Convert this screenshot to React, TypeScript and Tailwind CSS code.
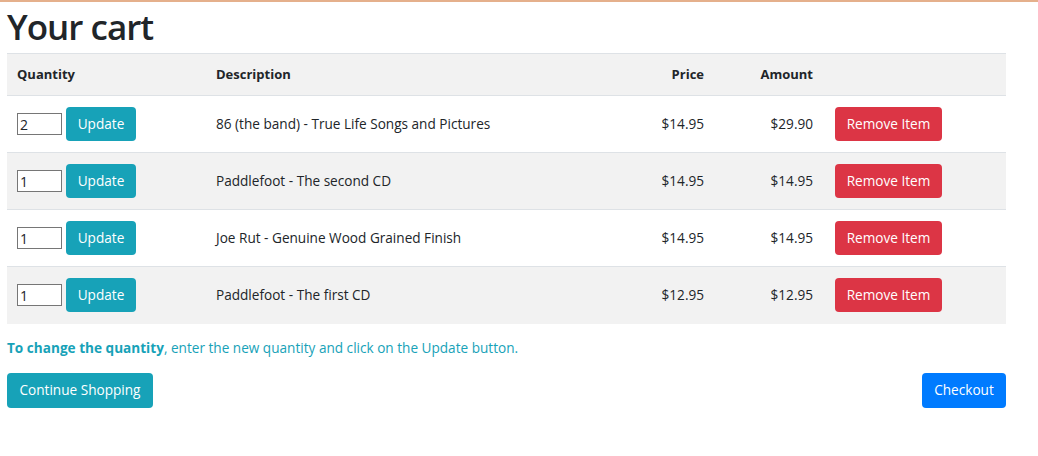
import React, { useState } from "react";

type CartItem = {
  id: number;
  qty: number;
  title: string;
  price: number;
};

const initialItems: CartItem[] = [
  { id: 1, qty: 2, title: "86 (the band) - True Life Songs and Pictures", price: 14.95 },
  { id: 2, qty: 1, title: "Paddlefoot - The second CD", price: 14.95 },
  { id: 3, qty: 1, title: "Joe Rut - Genuine Wood Grained Finish", price: 14.95 },
  { id: 4, qty: 1, title: "Paddlefoot - The first CD", price: 12.95 },
];

const money = (n: number) => "$" + n.toFixed(2);

export default function App() {
  const [items, setItems] = useState<CartItem[]>(initialItems);

  return (
    <div
      className="min-h-screen bg-white border-t-2 border-[#e5b08c] px-[7px] text-[#212529] text-[13.6px]"
      style={{ fontFamily: '"Open Sans", "Noto Sans", Arial, sans-serif' }}
    >
      <h1 className="text-[35px] font-semibold leading-[48px] mt-[1px] mb-[2px] tracking-[-1px]">Your cart</h1>

      <table className="w-[999px] table-fixed border-collapse">
        <colgroup>
          <col className="w-[199px]" />
          <col />
          <col className="w-[100px]" />
          <col className="w-[109px]" />
          <col className="w-[183px]" />
        </colgroup>
        <thead>
          <tr className="bg-[#f2f2f2] border-y border-[#dee2e6] h-[42px] text-[13px] font-bold">
            <th className="text-left px-[10px]">Quantity</th>
            <th className="text-left px-[10px]">Description</th>
            <th className="text-right px-[10px]">Price</th>
            <th className="text-right px-[10px]">Amount</th>
            <th></th>
          </tr>
        </thead>
        <tbody>
          {items.map((item, i) => (
            <tr
              key={item.id}
              className={
                "h-[57px] " +
                (i % 2 === 1 ? "bg-[#f2f2f2] " : "") +
                (i < items.length - 1 ? "border-b border-[#dee2e6]" : "")
              }
            >
              <td className="px-[10px]">
                <div className="flex items-center gap-[4px]">
                  <input
                    type="text"
                    value={item.qty}
                    onChange={(e) =>
                      setItems(items.map((it) => (it.id === item.id ? { ...it, qty: Number(e.target.value) || 0 } : it)))
                    }
                    className="w-[45px] h-[22px] bg-white border border-[#767676] px-[2px] text-[14px] outline-none"
                  />
                  <button className="h-[34px] w-[70px] rounded-[4px] bg-[#17a2b8] text-white text-[13.6px]">
                    Update
                  </button>
                </div>
              </td>
              <td className="px-[10px]">{item.title}</td>
              <td className="px-[10px] text-right">{money(item.price)}</td>
              <td className="px-[10px] text-right">{money(item.price * item.qty)}</td>
              <td className="pl-[12px]">
                <button className="h-[34px] w-[107px] rounded-[4px] bg-[#dc3545] text-white text-[13.6px]">
                  Remove Item
                </button>
              </td>
            </tr>
          ))}
        </tbody>
      </table>

      <p className="text-[#17a2b8] mt-[14px] text-[13.6px] leading-[20px]">
        <b>To change the quantity</b>, enter the new quantity and click on the Update button.
      </p>

      <div className="w-[999px] flex justify-between mt-[15px]">
        <button className="h-[35px] w-[146px] rounded-[4px] bg-[#17a2b8] text-white text-[13.6px]">
          Continue Shopping
        </button>
        <button className="h-[35px] w-[84px] rounded-[4px] bg-[#007bff] text-white text-[13.6px]">
          Checkout
        </button>
      </div>
    </div>
  );
}
